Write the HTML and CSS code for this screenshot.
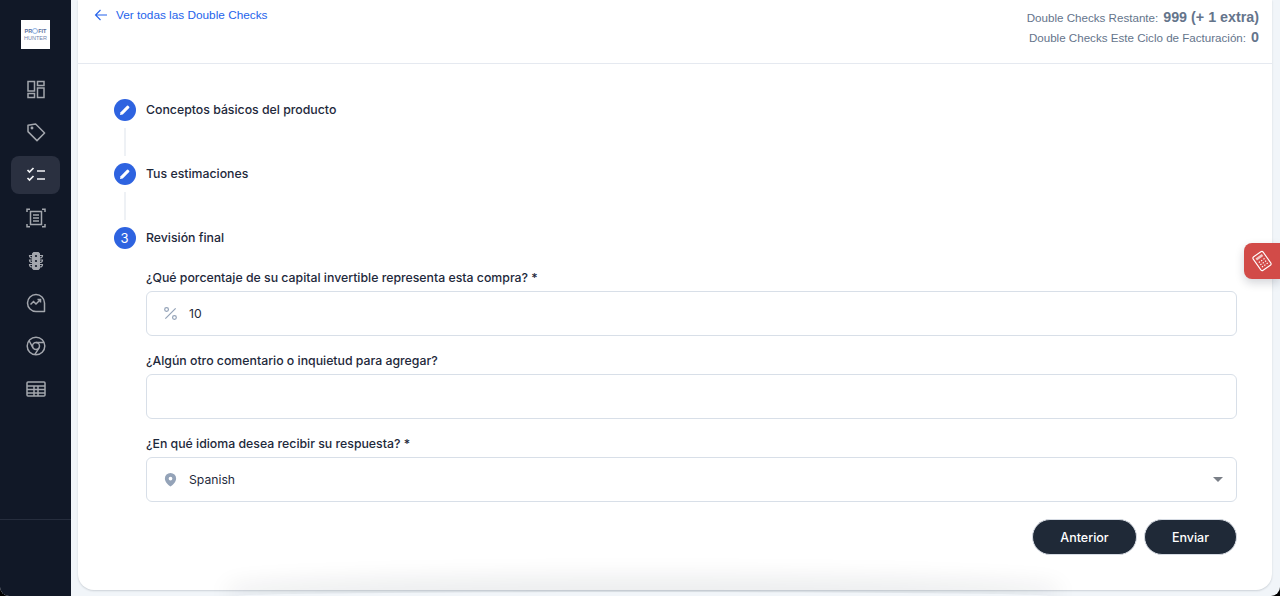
FILE: index.html
```html
<!DOCTYPE html>
<html lang="es">
<head>
<meta charset="utf-8">
<title>Double Check</title>
<link rel="stylesheet" href="styles.css">
</head>
<body>
<div class="app">
  <aside class="sidebar">
    <div class="logo"><span class="logo-top">PR<i class="logo-o"></i>FIT</span><span class="logo-bottom">HUNTER</span></div>
    <nav class="nav">
      <a class="nav-item"><svg viewBox="0 0 20 20" class="icon"><rect x="2" y="2.500" width="6.500" height="9.500"/><rect x="11.500" y="2.500" width="6.500" height="4"/><rect x="2" y="14.500" width="6.500" height="4"/><rect x="11.500" y="9" width="6.500" height="9.500"/></svg></a>
      <a class="nav-item"><svg viewBox="0 0 20 20" class="icon"><path d="M2 3.200 9.600 2 18.600 11 11 18.600 2 9.600Z" stroke-linejoin="round"/><circle cx="6" cy="6" r=".7"/></svg></a>
      <a class="nav-item active"><svg viewBox="0 0 20 20" class="icon icon-bright"><path d="M1.500 5 3.500 7 7.500 3M1.500 13 3.500 15 7.500 11M11 6h8M11 14h8" stroke-width="1.700"/></svg></a>
      <a class="nav-item"><svg viewBox="0 0 20 20" class="icon"><path d="M1 4V1.200H4M16 1.200H19V4M1 16V18.800H4M16 18.800H19V16"/><rect x="4.500" y="3.500" width="11" height="13"/><path d="M7 7h6M7 10h6M7 13h6"/></svg></a>
      <a class="nav-item"><svg viewBox="0 0 20 20" class="icon"><rect x="6.500" y="1.500" width="7" height="17" rx="1.500" class="icon-solid"/><path d="M6 4.500H3.500C3.500 6 4.500 7 6 7M14 4.500h2.500C16.500 6 15.500 7 14 7M6 9H3.500C3.500 10.500 4.500 11.500 6 11.500M14 9h2.500C16.500 10.500 15.500 11.500 14 11.500M6 13.500H3.500C3.500 15 4.500 16 6 16M14 13.500h2.500C16.500 15 15.500 16 14 16" stroke-width="1.200"/><circle cx="10" cy="5" r="1.100" class="icon-dot"/><circle cx="10" cy="10" r="1.100" class="icon-dot"/><circle cx="10" cy="15" r="1.100" class="icon-dot"/></svg></a>
      <a class="nav-item"><svg viewBox="0 0 20 20" class="icon"><path d="M18.500 10A8.500 8.500 0 1 0 10 18.500H18.500Z" stroke-linejoin="round"/><path d="M4.500 11.500 7.500 8.500 10 11 14.500 6.500M11.500 6.500H14.500V9.500"/></svg></a>
      <a class="nav-item"><svg viewBox="0 0 20 20" class="icon"><circle cx="10" cy="10" r="8.800"/><circle cx="10" cy="10" r="3.500"/><path d="M10 6.500H18M7 11.800 3 4.500M13 11.800 8.800 18.700"/></svg></a>
      <a class="nav-item"><svg viewBox="0 0 20 20" class="icon"><rect x="1" y="3" width="18" height="14" rx="1"/><path d="M1 7H19M1 10.500H19M1 14H19M8 7V17M12 7V17"/></svg></a>
    </nav>
    <div class="sidebar-rule"></div>
  </aside>
  <main class="main">
    <section class="card">
      <header class="topbar">
        <a class="back-link"><svg viewBox="0 0 14 14" class="back-icon"><path d="M13 7H1.500M6.500 2 1.500 7 6.500 12"/></svg>Ver todas las Double Checks</a>
        <div class="stats">
          <p class="stat">Double Checks Restante:<strong>999 (+ 1 extra)</strong></p>
          <p class="stat">Double Checks Este Ciclo de Facturación:<strong>0</strong></p>
        </div>
      </header>
      <div class="stepper">
        <div class="step done">
          <div class="step-rail"><span class="bullet"><svg viewBox="0 0 12 12" class="pencil"><path d="M1.800 10.200 2.400 7.600 8.300 1.700A.8.8 0 0 1 9.400 1.700L10.300 2.600A.8.8 0 0 1 10.300 3.700L4.400 9.600Z"/></svg></span><span class="line"></span></div>
          <div class="step-title">Conceptos básicos del producto</div>
        </div>
        <div class="step done">
          <div class="step-rail"><span class="bullet"><svg viewBox="0 0 12 12" class="pencil"><path d="M1.800 10.200 2.400 7.600 8.300 1.700A.8.8 0 0 1 9.400 1.700L10.300 2.600A.8.8 0 0 1 10.300 3.700L4.400 9.600Z"/></svg></span><span class="line"></span></div>
          <div class="step-title">Tus estimaciones</div>
        </div>
        <div class="step current">
          <div class="step-rail"><span class="bullet">3</span></div>
          <div class="step-body">
            <div class="step-title">Revisión final</div>
            <form class="form">
              <div class="field">
                <label class="label">¿Qué porcentaje de su capital invertible representa esta compra? *</label>
                <div class="input">
                  <svg viewBox="0 0 16 16" class="input-icon stroke"><path d="M2.500 13.500 13.500 2.500"/><circle cx="3.800" cy="3.800" r="2"/><circle cx="12.200" cy="12.200" r="2"/></svg>
                  <span>10</span>
                </div>
              </div>
              <div class="field">
                <label class="label">¿Algún otro comentario o inquietud para agregar?</label>
                <div class="input"></div>
              </div>
              <div class="field">
                <label class="label">¿En qué idioma desea recibir su respuesta? *</label>
                <div class="input">
                  <svg viewBox="0 0 16 16" class="input-icon fill"><path fill-rule="evenodd" d="M8 1a6 6 0 0 1 6 6c0 3.500-3 6.500-6 8.500C5 13.500 2 10.500 2 7a6 6 0 0 1 6-6Zm0 4a2 2 0 1 0 0 4 2 2 0 0 0 0-4Z"/></svg>
                  <span>Spanish</span>
                  <span class="caret"></span>
                </div>
              </div>
              <div class="actions">
                <button type="button" class="btn btn-prev">Anterior</button>
                <button type="button" class="btn btn-send">Enviar</button>
              </div>
            </form>
          </div>
        </div>
      </div>
      <span class="calc-tab"><svg viewBox="0 0 20 20" class="calc-icon"><g transform="rotate(-35 10 10)"><rect x="4.500" y="2.500" width="11" height="15" rx="1.500"/><rect x="6.500" y="4.700" width="7" height="2.300" class="calc-screen"/><path d="M6.800 9.500H8M9.400 9.500H10.600M12 9.500H13.200M6.800 12H8M9.400 12H10.600M12 12H13.200M6.800 14.500H8M9.400 14.500H10.600M12 14.500H13.200"/></g></svg></span>
      <span class="bottom-shade"></span>
    </section>
  </main>
</div>
</body>
</html>
```
FILE: styles.css
```css
* { box-sizing: border-box; }
html, body { margin: 0; height: 100%; overflow: hidden; background: #000; }
body { font-family: Inter, "Liberation Sans", sans-serif; color: #1e293b; }
.app { display: flex; height: 596px; background: #f1f5f9; border-radius: 0 0 9px 9px; overflow: hidden; }

.sidebar { width: 71px; flex: none; background: #111827; display: flex; flex-direction: column; align-items: center; position: relative; }
.logo { width: 29px; height: 29px; margin-top: 20px; background: #fff; display: flex; flex-direction: column; align-items: center; justify-content: center; line-height: 7px; }
.logo-top { font-size: 5.500px; font-weight: 800; color: #5b6f9c; display: flex; align-items: center; font-family: "Liberation Sans", sans-serif; }
.logo-o { width: 6px; height: 6px; border: 1px solid #8fb2e4; border-radius: 50%; display: block; }
.logo-bottom { font-size: 5.500px; color: #7184ad; font-family: "Liberation Sans", sans-serif; }
.nav { margin-top: 21px; display: flex; flex-direction: column; gap: 4px; align-items: center; }
.nav-item { width: 49px; height: 38.800px; border-radius: 8px; display: flex; align-items: center; justify-content: center; }
.nav-item.active { background: #2a3040; }
.icon { width: 20px; height: 20px; fill: none; stroke: #a3a6ad; stroke-width: 1.500; }
.icon-bright { stroke: #f3f4f6; }
.icon .icon-solid { fill: #a3a6ad; stroke-width: 1; }
.icon .icon-dot { fill: #111827; stroke: none; }
.sidebar-rule { position: absolute; left: 0; right: 0; top: 519px; height: 1px; background: #262d3d; }

.main { flex: 1; min-width: 0; padding: 0 8px 6px 7px; }
.card { position: relative; height: 590px; background: #fff; border-radius: 0 0 16px 16px; box-shadow: 0 1px 2px rgba(15, 23, 42, .16); }
.topbar { height: 64px; border-bottom: 1px solid #e5e9f0; display: flex; justify-content: space-between; padding: 7px 13px 0 16px; }
.back-link { display: flex; align-items: flex-start; gap: 8px; color: #2563eb; font-family: "Liberation Sans", Arial, sans-serif; font-size: 11.800px; line-height: 16px; }
.back-icon { width: 14px; height: 14px; margin-top: 1px; fill: none; stroke: #2563eb; stroke-width: 1.100; }
.stats { display: flex; flex-direction: column; align-items: flex-end; gap: 1px; padding-top: 1px; }
.stat { margin: 0; font-family: "Liberation Sans", Arial, sans-serif; font-size: 11.600px; line-height: 19px; color: #64748b; display: flex; align-items: baseline; gap: 5px; }
.stat strong { font-size: 14.300px; color: #64748b; font-weight: 700; }

.stepper { padding: 35px 35px 0 35.500px; display: flex; flex-direction: column; }
.step { display: flex; gap: 10.500px; }
.step-rail { width: 22px; flex: none; display: flex; flex-direction: column; align-items: center; }
.bullet { width: 22px; height: 22px; flex: none; border-radius: 50%; background: #2e63e0; color: #fff; font-size: 13px; display: flex; align-items: center; justify-content: center; }
.pencil { width: 13px; height: 13px; fill: #fff; }
.line { width: 2px; height: 28px; margin: 7px 0; background: #eef1f5; }
.step.done { height: 64px; }
.step-title { font-size: 12.300px; line-height: 22px; font-weight: 500; color: #1e293b; }
.step-body { flex: 1; min-width: 0; }
.form { padding-top: 19px; display: flex; flex-direction: column; gap: 15px; }
.field { display: flex; flex-direction: column; gap: 4px; }
.label { margin-top: 1px; font-size: 12.300px; line-height: 18px; font-weight: 500; color: #1e293b; }
.input { height: 45px; border: 1.500px solid #d8dfe8; border-radius: 6px; background: #fff; display: flex; align-items: center; padding-left: 15.500px; font-size: 12.200px; color: #1e293b; position: relative; }
.input-icon { width: 15px; height: 15px; margin-right: 11.500px; flex: none; }
.input-icon.stroke { fill: none; stroke: #94a3b8; stroke-width: 1.300; }
.input-icon.fill { fill: #94a3b8; }
.caret { margin-left: auto; margin-right: 13px; width: 0; height: 0; border-left: 5px solid transparent; border-right: 5px solid transparent; border-top: 5px solid #7a7f87; }
.actions { display: flex; justify-content: flex-end; gap: 7px; margin-top: 2px; }
.btn { height: 36px; padding: 0; border: 1px solid #d6dbe3; border-radius: 18px; background: #1f2937; color: #fff; font: 500 12.500px Inter, sans-serif; }
.btn-prev { width: 105px; }
.btn-send { width: 93px; }

.calc-tab { position: absolute; top: 243px; right: -8px; width: 36px; height: 36px; background: #d24b48; border-radius: 8px 0 0 8px; display: flex; align-items: center; justify-content: center; box-shadow: 0 4px 10px rgba(15, 23, 42, .18); }
.calc-icon { width: 22px; height: 22px; fill: none; stroke: #fff; stroke-width: 1; }
.calc-icon .calc-screen { fill: #fff; stroke: none; opacity: .7; }
.bottom-shade { position: absolute; left: 160px; width: 810px; bottom: -10px; height: 8px; border-radius: 50%; box-shadow: 0 -4px 22px 12px rgba(15, 23, 42, .08); pointer-events: none; }
```
